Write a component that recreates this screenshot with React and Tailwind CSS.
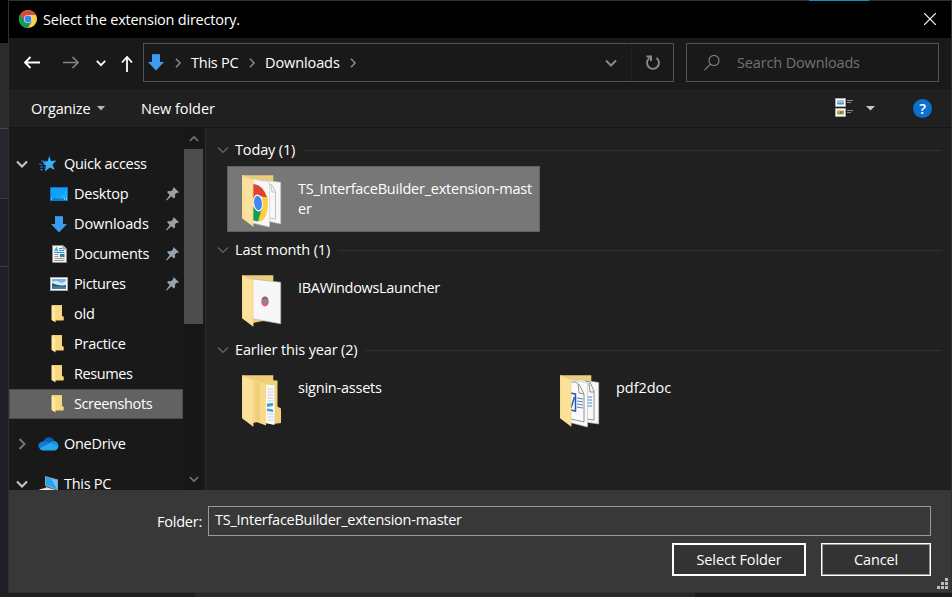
import React from "react";

const DownArrow = () => (
  <svg width="16" height="17" viewBox="0 0 16 17" className="shrink-0">
    <path d="M4 0h8v8h4l-8 8.500L0 8h4z" fill="#3c9cee" />
    <path d="M4 0h8v1H4z" fill="#2d86d6" />
  </svg>
);

const Star = () => (
  <svg width="20" height="16" viewBox="0 0 20 16" className="-ml-px shrink-0">
    <path d="M11.300 0l1.700 5 5.500-.5-4 4 2.200 5.500-4.800-2.600-5 4 1-5.700L4.500 5.500l5.100-.2z" fill="#38b0f8" />
    <path d="M3 5h5M1 8.200h6M2 11h5M2 13.700h4" stroke="#1683cf" strokeWidth="1" strokeDasharray="3 1" />
  </svg>
);

const Desktop = () => (
  <svg width="18" height="14" viewBox="0 0 18 14" className="shrink-0">
    <rect width="18" height="14" fill="#0a78cf" />
    <rect x="1" y="1" width="16" height="10.500" fill="#12a0fb" />
    <path d="M9 11.500L17 3v8.500z" fill="#26acff" />
    <path d="M1 12h1M14 12h1M16 12h1" stroke="#fff" />
  </svg>
);

const Doc = () => (
  <svg width="15" height="18" viewBox="0 0 15 18" className="shrink-0">
    <path d="M.5.500h10.500l3.500 3.500v13.500H.500z" fill="#f4f4f4" stroke="#8d8d8d" />
    <path d="M11 .500v3.500h3.500" fill="#ccc" stroke="#8d8d8d" />
    <path d="M2.500 6.500L4.500 2.500 5.500 6.500M3.500 5h2M7 3.500h3M7 5.500h5M2.500 7.500h10" stroke="#2491dc" fill="none" />
    <path d="M2.500 9.500h4M2.500 11.500h4M2.500 13.500h10M2.500 15.500h10" stroke="#9a9a9a" />
    <rect x="8" y="9" width="4.500" height="3" fill="#2c7fa8" />
  </svg>
);

const Pictures = () => (
  <svg width="18" height="14" viewBox="0 0 18 14" className="shrink-0">
    <rect x=".5" y=".5" width="17" height="13" fill="#fff" stroke="#a9a9a9" />
    <rect x="2" y="2" width="14" height="10" fill="#75b5ef" />
    <path d="M2 5q4-2 7 0t7-1v4H2z" fill="#d5edfb" />
    <path d="M2 6l4 1.500 6 1.500 4-1v2H2z" fill="#315d52" />
    <path d="M2 9.500h14V12H2z" fill="#477fa9" />
  </svg>
);

const SmallFolder = () => (
  <svg width="13" height="18" viewBox="0 0 13 18" className="-ml-[3px] shrink-0">
    <path d="M1 0h10v11l1.500.5v4H1z" fill="#f3d06f" />
    <path d="M5 1h6v10.500l1.500.5v3H5z" fill="#f8da7d" />
    <path d="M.5 .3l4 2.200V17.500l-4-2.700z" fill="#ffe8a2" />
  </svg>
);

const Pin = () => (
  <svg width="13" height="14" viewBox="0 0 13 14" className="-mt-px shrink-0">
    <path d="M7.500 0L13 5.200l-1.500.8-1-.2-1.700 2 .4 2.200-1.200 1.500L5.300 9.200.8 13.500 0 13l3.700-5L1 5l1.500-1 2.500.2 2-2z" fill="#98a2aa" />
  </svg>
);

const Cloud = () => (
  <svg width="21" height="14" viewBox="0 0 21 14" className="-ml-px shrink-0">
    <path d="M5 5C7-.8 14-1.500 16.500 4.500L11 9z" fill="#0c5fb5" />
    <path d="M4 13C-1 12-1 5 5 4.500c2.500-1 5 1 8 2.500L8 13z" fill="#1279d4" />
    <path d="M16 4.300c5 0 6 8 1 9.200H4.500C2.500 13 2 12 2 11l9-4.500z" fill="#28a8ea" />
    <path d="M11 5.500l5-1.200c3 0 4.500 2.700 4.500 5z" fill="#1490df" />
  </svg>
);

const Computer = () => (
  <svg width="20" height="17" viewBox="0 0 20 17" className="shrink-0">
    <path d="M6 0l13 3.500v11L6 10z" fill="#92a1aa" />
    <path d="M7 1.300l11 3v8.700L7 9z" fill="#23a4f5" />
    <path d="M12 2.600l6 1.700v8.700z" fill="#65c5ff" />
    <path d="M7 11l10 3-3 1.500L6 13z" fill="#d5dde1" />
    <path d="M0 13.500l6-1.500 5 2-6 2z" fill="#e6eaec" />
  </svg>
);

const Chevron = ({ d, w = 12, h = 12, c = "#8a8a8a", s = 1.8 }) => (
  <svg width={w} height={h} viewBox="0 0 12 12" fill="none" stroke={c} strokeWidth={s} className="shrink-0">
    <path d={d} />
  </svg>
);
const DOWN = "M1 3.500l5 5 5-5";
const RIGHT = "M3.500 1l5 5-5 5";
const UP = "M1 8.500l5-5 5 5";

const Chrome = () => (
  <svg width="18" height="18" viewBox="0 0 18 18" className="shrink-0">
    <circle cx="9" cy="9" r="9" fill="#fdd04b" />
    <path d="M9 9L1.200 4.500A9 9 0 0 0 9 18l4-7z" fill="#149b58" />
    <path d="M9 9V5h7.800A9 9 0 0 0 1.200 4.500L5.500 11z" fill="#da4a3c" />
    <path d="M1.200 4.500L5.500 11 9 13l-2 4.800A9 9 0 0 1 1.200 4.500z" fill="#149b58" />
    <circle cx="9" cy="9" r="4.100" fill="#dfe7f4" />
    <circle cx="9" cy="9" r="3.400" fill="#4384ec" />
  </svg>
);

function BigFolder({ kind }) {
  return (
    <svg width="44" height="57" viewBox="0 0 44 57" className="shrink-0">
      <path d="M2 2.300h31.300V46L13 50 2 45z" fill="#edcd7a" />
      {kind === "chrome" && (
        <>
          <path d="M23 7l17.700 2.300V51L23 47z" fill="#f7f7f7" stroke="#bdbdbd" strokeWidth=".6" />
          <path d="M27 11l5 1 3.500 7v27l-6-1M31 12l1 7h3" fill="none" stroke="#b5b5b5" strokeWidth=".8" />
          <path d="M10 5.500L29.500 9V54L12.500 50z" fill="#f7f7f7" stroke="#c9c9c9" strokeWidth=".6" />
          <path d="M13 11q9.500 0 14.500 14l-8-2-6.500 3z" fill="#de4436" />
          <path d="M27.500 24c1.500 10-1 23-7 24.500l-5-1L22 35V24z" fill="#ffce3f" />
          <path d="M13 34l9 1-4 13.500-5-1z" fill="#159d57" />
          <ellipse cx="18" cy="30" rx="4.800" ry="8.500" fill="#fff" transform="rotate(-7 18 30)" />
          <ellipse cx="18" cy="30" rx="3.900" ry="7.200" fill="#4285f4" transform="rotate(-7 18 30)" />
        </>
      )}
      {kind === "page" && (
        <>
          <path d="M11 5.800L40.700 9.300V50.800L11 45.500z" fill="#f7f7f7" stroke="#b5b5b5" strokeWidth=".7" />
          <ellipse cx="25" cy="28.500" rx="3.800" ry="5" fill="#ef5670" />
          <path d="M22.500 26q2.500-3 5 0" stroke="#a34d50" strokeWidth="1.500" fill="none" />
          <circle cx="25.200" cy="28" r="2.300" fill="#35aeb0" />
        </>
      )}
      {kind === "nested" && (
        <>
          <path d="M22 7l15.500.5v26l3.500 2v14.500l-8 1-11-2z" fill="#f0d07b" />
          <path d="M25 11.500l9.500 1v39.500L25 50z" fill="#fafafa" />
          <path d="M27.500 16h6M27.500 19h6M27.500 22h6M27.500 25h6M27.500 28h6M27.500 41h6M27.500 44h6M27.500 47h6" stroke="#c3ced8" />
          <path d="M27 30.500l6-.5v3l-6 1zM27 35.500l6 1v2.500l-6-1z" fill="#419ed7" />
          <path d="M9 5l17 6v41.500L9 46z" fill="#f8da8a" />
          <path d="M15 8l5 2.500v38L15 47z" fill="#f0cf7c" />
        </>
      )}
      {kind === "docs" && (
        <>
          <path d="M20 6.500l20.700 3V51L20 48z" fill="#f8f8f8" stroke="#bdbdbd" strokeWidth=".6" />
          <path d="M27 8l5 1 4 9v29l-8-1M31 10l1 9h4" fill="none" stroke="#777" strokeWidth=".8" />
          <path d="M29 24h5M29 27h5M29 30h5M29 33h5" stroke="#4b86cc" strokeWidth="1.200" />
          <path d="M10 6l19.500 4V54L10 49z" fill="#fafafa" stroke="#b8b8b8" strokeWidth=".6" />
          <path d="M13 9q6-1 9 4l4 8v28l-13-3M20 11l1 9 5 1" fill="none" stroke="#777" strokeWidth=".8" />
          <path d="M12 20l5.500 1v17l-5-1M13 35l3.500-11" fill="none" stroke="#285aa8" strokeWidth="1.500" />
          <path d="M19 25l6 1M19 28l6 1M19 31l6 1M19 34l6 1" stroke="#4b86cc" strokeWidth="1.100" />
        </>
      )}
      <path d="M2.300 2.500L13 7V53.500L2.300 45.500z" fill="#fbe199" />
      <path d="M2.300 2.500L13 7V53.500" fill="none" stroke="#f0d489" strokeWidth=".8" />
    </svg>
  );
}

function SideItem({ icon, label, pinned, active, track = "tracking-[-0.24px]" }) {
  return (
    <div className={`flex h-[30px] w-[174px] items-center ${active ? "border border-[#4a4a4a] bg-[#626262] pl-[39px]" : "pl-10"}`}>
      <span className="flex w-[25px] items-center">
        <span className="flex w-[20px] justify-center">{icon}</span>
      </span>
      <span className={`w-[92px] whitespace-nowrap ${track}`}>{label}</span>
      {pinned && <Pin />}
    </div>
  );
}

function RootItem({ icon, label, open }) {
  return (
    <div className="flex h-[30px] items-center pl-[7px] tracking-[-0.28px]">
      <Chevron d={open ? DOWN : RIGHT} c={open ? "#c8c8c8" : "#757575"} s={2} />
      <span className="ml-[11px] flex w-[25px] items-center">{icon}</span>
      <span className="whitespace-nowrap">{label}</span>
    </div>
  );
}

function Group({ title, children }) {
  return (
    <section className="mb-2">
      <div className="flex h-5 items-center pl-[11px] tracking-[-0.15px]">
        <Chevron d={DOWN} c="#686868" s={1.200} />
        <h2 className="ml-1.5 whitespace-nowrap">{title}</h2>
        <div className="ml-2 h-px flex-1 bg-[#303030]" />
      </div>
      <div className="mt-1.5 flex gap-[5px] pl-[21px]">{children}</div>
    </section>
  );
}

function Tile({ kind, name, selected, track = "" }) {
  return (
    <div className={`flex h-[66px] w-[313px] border ${selected ? "border-[#606060] bg-[#777777]" : "border-transparent"}`}>
      <div className="ml-3 mt-1.5 w-[58px]">
        <BigFolder kind={kind} />
      </div>
      <p className={`w-[238px] break-all leading-5 ${selected ? "mt-3" : "mt-[11px]"} ${track}`}>{name}</p>
    </div>
  );
}

export default function App() {
  return (
    <div className="relative flex h-[597px] w-[952px] flex-col overflow-hidden bg-[#1f2025] font-['Open_Sans','Noto_Sans',sans-serif] text-[14.5px] leading-5 tracking-[-0.23px] text-white">
      <div className="flex h-[593px]">
        <div className="w-2 bg-[#1f2025]">
          <div className="h-[43px] bg-black" />
          <div className="h-[85px] bg-[#2b2b2b]" />
          <div className="h-[70px] border-t border-[#48484a] bg-[#26272c]" />
          <div className="h-[68px] border-t border-[#3b3b3e] bg-[#1f2025]" />
          <div className="border-t border-[#3b3b3e]" />
        </div>

        <div className="flex w-[944px] flex-col border border-[#303030] bg-[#191919]">
          <header className="flex h-[37px] items-center bg-black pb-0.5 pl-2.5 pr-[15px]">
            <Chrome />
            <h1 className="ml-1.5 flex-1 pt-0.5">Select the extension directory.</h1>
            <svg width="12" height="12" viewBox="0 0 12 12" stroke="#fff" strokeWidth="1.200">
              <path d="M0 0l12 12M12 0L0 12" />
            </svg>
          </header>

          <nav className="flex h-[51px] items-center pb-0.5 pl-[15px] pr-3">
            <svg width="16" height="13" viewBox="0 0 16 13" fill="none" stroke="#fff" strokeWidth="1.900">
              <path d="M16 6.500H1M6.500 1L1 6.500 6.500 12" />
            </svg>
            <svg width="16" height="13" viewBox="0 0 16 13" fill="none" stroke="#858585" strokeWidth="1.700" className="ml-[23px]">
              <path d="M0 6.500h15M9.500 1L15 6.500 9.500 12" />
            </svg>
            <span className="ml-[17px]"><Chevron d={DOWN} w={10} h={10} c="#fff" s={2.200} /></span>
            <svg width="12" height="16" viewBox="0 0 12 16" fill="none" stroke="#fff" strokeWidth="1.800" className="ml-[15px] mt-[3px]">
              <path d="M6 16V1M1 6.500L6 1l5 5.500" />
            </svg>
            <div className="ml-2.5 flex h-[39px] w-[531px] shrink-0 items-center border border-[#535353] pl-1">
              <DownArrow />
              <span className="ml-[9px]"><Chevron d={RIGHT} w={10} h={10} /></span>
              <span className="ml-[8px] w-[48px] whitespace-nowrap">This PC</span>
              <span className="ml-[8px]"><Chevron d={RIGHT} w={10} h={10} /></span>
              <span className="ml-[8px] w-[76px] whitespace-nowrap tracking-[-0.1px]">Downloads</span>
              <span className="ml-[7px] flex-1"><Chevron d={RIGHT} w={10} h={10} /></span>
              <span className="mr-[14px]"><Chevron d={DOWN} s={2} /></span>
              <div className="flex h-full w-[42px] items-center justify-center border-l border-[#202020]">
                <svg width="16" height="16" viewBox="0 0 16 16" fill="none" stroke="#8a8a8a" strokeWidth="1.900">
                  <path d="M11.500 3A6 6 0 1 1 4.500 3M1.500 1.500H6V6" />
                </svg>
              </div>
            </div>
            <div className="ml-3 flex h-[39px] w-[253px] shrink-0 items-center border border-[#535353] pl-[17px] tracking-[-0.15px] text-[#737373]">
              <svg width="16" height="16" viewBox="0 0 16 16" fill="none" stroke="#858585" strokeWidth="1.100">
                <circle cx="10" cy="5.500" r="5" />
                <path d="M6.500 9.200L.5 15.200" />
              </svg>
              <span className="ml-[17px]">Search Downloads</span>
            </div>
          </nav>

          <div className="flex h-[38px] items-center bg-[#202020] pl-[22px] pr-[19px]">
            <span className="w-[60px] pt-0.5 tracking-[-0.15px]">Organize</span>
            <svg width="8" height="5" className="ml-[6px]"><path d="M0 0h8L4 4.500z" fill="#b8b8b8" /></svg>
            <span className="ml-[36px] flex-1 pt-0.5 tracking-[-0.03px]">New folder</span>
            <svg width="19" height="20" viewBox="0 0 19 20">
              <path d="M.5.500h10v8H.500zM.5 10.500h10v8H.500z" fill="#fff" stroke="#a8a8a8" />
              <path d="M2 2.500h7v4H2z" fill="#4e93cc" />
              <path d="M2 3.500h7v1H2z" fill="#d3e9f4" />
              <path d="M2 12.500h7v4H2z" fill="#88a84c" />
              <path d="M2 12.500h3v2H2z" fill="#e5a53b" />
              <path d="M5 13.500h2v2H5z" fill="#d74936" />
              <path d="M12 2.500h6M12 4.500h4M12 12.500h6M12 14.500h4" stroke="#888" />
            </svg>
            <svg width="9" height="5" className="ml-[12px]"><path d="M0 0h9L4.500 4.500z" fill="#c8c8c8" /></svg>
            <div className="ml-[38px] flex size-[19px] items-center justify-center rounded-full bg-[#0b70d2] text-[15px] font-semibold">?</div>
          </div>

          <main className="flex h-[363px] overflow-hidden border-t border-[#161616]">
            <aside className="w-[175px] pt-[21px]">
              <RootItem icon={<Star />} label="Quick access" open />
              <SideItem icon={<Desktop />} label="Desktop" pinned />
              <SideItem icon={<DownArrow />} label="Downloads" pinned track="tracking-[-0.1px]" />
              <SideItem icon={<Doc />} label="Documents" pinned track="tracking-[-0.28px]" />
              <SideItem icon={<Pictures />} label="Pictures" pinned track="tracking-[-0.36px]" />
              <SideItem icon={<SmallFolder />} label="old" />
              <SideItem icon={<SmallFolder />} label="Practice" />
              <SideItem icon={<SmallFolder />} label="Resumes" track="tracking-[-0.4px]" />
              <SideItem icon={<SmallFolder />} label="Screenshots" active track="tracking-[-0.4px]" />
              <div className="mt-2.5"><RootItem icon={<Cloud />} label="OneDrive" /></div>
              <div className="mt-2.5"><RootItem icon={<Computer />} label="This PC" open /></div>
            </aside>
            <div className="flex w-[19px] flex-col items-center bg-[#171717]">
              <div className="flex h-[21px] items-center"><Chevron d={UP} w={10} h={10} c="#777" /></div>
              <div className="h-[175px] w-full bg-[#4d4d4d]" />
              <div className="flex flex-1 items-end pb-[6px]"><Chevron d={DOWN} w={10} h={10} c="#777" /></div>
            </div>
            <div className="ml-[2px] flex-1 border-l border-[#2b2b2b] bg-[#202020] pr-[9px] pt-3">
              <Group title="Today (1)">
                <Tile kind="chrome" name="TS_InterfaceBuilder_extension-master" selected />
              </Group>
              <Group title="Last month (1)">
                <Tile kind="page" name="IBAWindowsLauncher" track="tracking-[-0.32px]" />
              </Group>
              <Group title="Earlier this year (2)">
                <Tile kind="nested" name="signin-assets" />
                <Tile kind="docs" name="pdf2doc" track="tracking-[-0.05px]" />
              </Group>
            </div>
          </main>

          <footer className="flex flex-1 flex-col bg-[#383838] pt-4">
            <div className="flex h-[30px] items-center pl-[148px] pr-[20px]">
              <label className="w-[51px] pt-0.5">Folder:</label>
              <div className="flex h-[30px] flex-1 items-center border border-[#999] pb-0.5 pl-1.5 tracking-[-0.25px]">TS_InterfaceBuilder_extension-master</div>
            </div>
            <div className="mt-[7px] flex h-[33px] justify-end gap-[15px] pr-[20px] tracking-[-0.12px]">
              <button className="w-[134px] border-2 border-white bg-[#333]">Select Folder</button>
              <button className="w-[110px] border border-white bg-[#333] outline outline-1 -outline-offset-2 outline-[#999]">Cancel</button>
            </div>
          </footer>
        </div>
      </div>
      <div className="flex h-1">
        <div className="w-[195px] bg-[#1f2025]" />
        <div className="w-[500px] bg-[#27292d]" />
        <div className="flex-1 bg-[#1b1c20]" />
      </div>

      <div className="absolute left-[809px] top-0 h-px w-[60px] bg-[#0796b8]" />
      <svg width="11" height="11" className="absolute left-[937px] top-[578px]" fill="#bdbdbd">
        <path d="M8 0h3v3H8zM4 4h3v3H4zM8 4h3v3H8zM0 8h3v3H0zM4 8h3v3H4zM8 8h3v3H8z" />
      </svg>
    </div>
  );
}
